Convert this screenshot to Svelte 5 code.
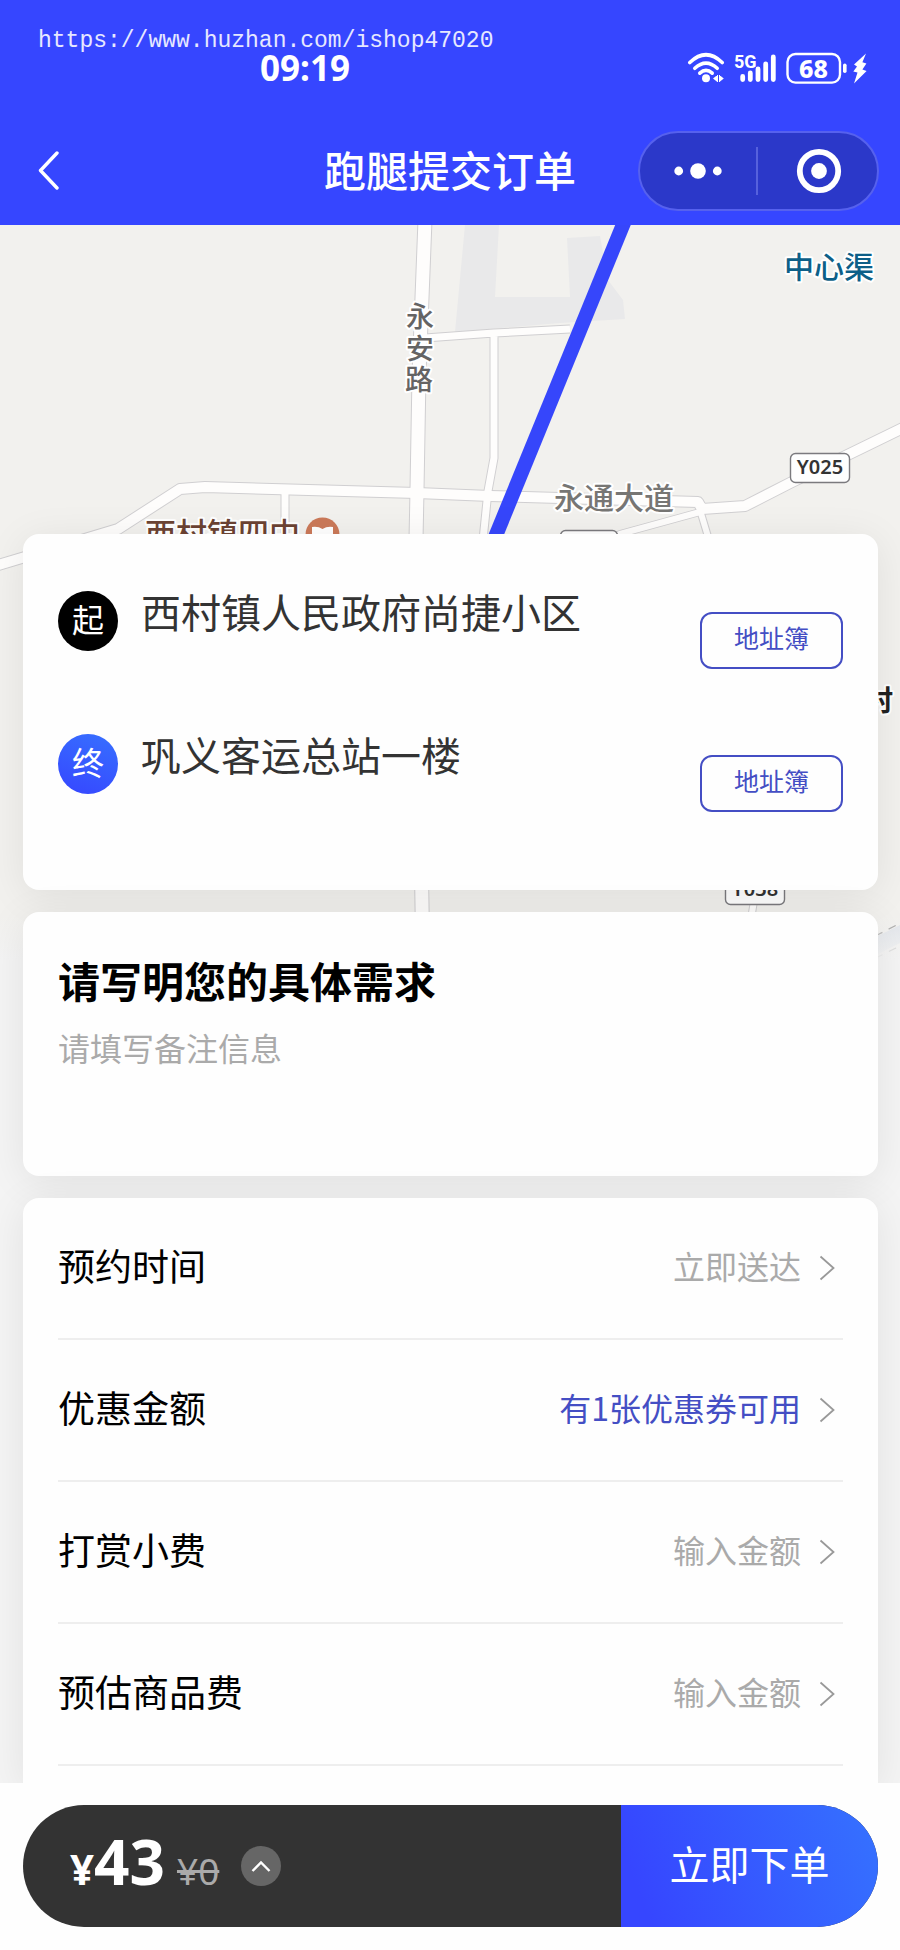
<script>
  const stops = [
    { mark: '起', kind: 'start', name: '西村镇人民政府尚捷小区' },
    { mark: '终', kind: 'end', name: '巩义客运总站一楼' }
  ];
  const options = [
    { id: 'time', label: '预约时间', value: '立即送达' },
    { id: 'coupon', label: '优惠金额', value: '有1张优惠券可用', active: true },
    { id: 'tip', label: '打赏小费', placeholder: '输入金额' },
    { id: 'goods', label: '预估商品费', placeholder: '输入金额' }
  ];
</script>

{#snippet chevron()}
  <svg class="chevron" viewBox="0 0 16 26" aria-hidden="true">
    <path d="M1.5 1.5 14.5 13 1.5 24.5" fill="none" stroke="#999" stroke-width="1.8" />
  </svg>
{/snippet}

<div class="page">
  <header>
    <span class="watermark">https://www.huzhan.com/ishop47020</span>
    <div class="status">
      <span class="clock">09:19</span>
      <svg class="signals" viewBox="0 0 180 33" aria-hidden="true" fill="#fff">
        <g fill="none" stroke="#fff" stroke-width="3.6" stroke-linecap="round">
          <path d="M2.8 10.5Q19-5 35.2 10.5" />
          <path d="M7.8 16.3Q19 6 30.2 16.3" />
          <path d="M12.8 21.2Q19 15.5 25.2 21.2" />
        </g>
        <circle cx="19" cy="26.3" r="4" />
        <path d="M26 26.5 30.4 23v7ZM32.4 23l4.4 3.5-4.4 3.5ZM30 23h1v7h-1zM32 23h1v7h-1z" />
        <text class="network" x="47" y="15.5">5G</text>
        <g stroke="#fff" stroke-width="4.8" stroke-linecap="round">
          <path d="M55.7 24.4V27.6M63.3 21V27.6M71 17V27.6M78.7 11.8V27.6M86.3 5V27.6" />
        </g>
        <rect x="100.5" y="2" width="52.5" height="28.6" rx="8" fill="none" stroke="#fff" stroke-width="2.4" />
        <rect x="156" y="11.5" width="3.6" height="9.5" rx="1.8" />
        <text class="charge" x="126.5" y="25.5">68</text>
        <path d="M179 1.5 167 12.5 170 14.5 166.3 19.5 170.5 20.5 167 31.5 179.6 19 175.4 17.6 179.4 11.6 175.4 10.2Z" />
      </svg>
    </div>
    <nav>
      <button class="back" aria-label="返回">
        <svg viewBox="0 0 22 40"><path d="M19 2 2.5 19.5 19 37" fill="none" stroke="#fff" stroke-width="3.4" stroke-linecap="round" stroke-linejoin="round" /></svg>
      </button>
      <h1>跑腿提交订单</h1>
      <div class="capsule">
        <button aria-label="更多">
          <svg class="dots" viewBox="0 0 48 18" fill="#fff"><circle cx="4.7" cy="9" r="4.4" /><circle cx="24" cy="9" r="7.8" /><circle cx="43.3" cy="9" r="4.4" /></svg>
        </button>
        <button aria-label="关闭">
          <svg class="target" viewBox="0 0 46 46"><circle cx="23" cy="23" r="19.2" fill="none" stroke="#fff" stroke-width="5.8" /><circle cx="23" cy="23" r="7.9" fill="#fff" /></svg>
        </button>
      </div>
    </nav>
  </header>

  <main>
    <svg class="map" viewBox="0 0 900 735" role="img" aria-label="路线地图">
      <defs>
        <linearGradient id="fade" x1="0" y1="0" x2="0" y2="1">
          <stop offset="0" stop-color="#f4f4f4" stop-opacity="0" />
          <stop offset="1" stop-color="#f4f4f4" />
        </linearGradient>
      </defs>
      <rect width="900" height="735" fill="#f2f1ee" />
      <path d="M465 0H499L495 72H570L567 13 600 11 608 55 623 75 625 94 560 98 455 107Z" fill="#e9e9ea" />
      {#each [{ c: '#d0cfd1', e: 2 }, { c: '#fefdfc', e: 0 }] as layer}
        <g fill="none" stroke={layer.c} stroke-linejoin="round">
          <path stroke-width={7 + layer.e} d="M425 113 494 108 570 104M494 108V233L488 266 483 315M285 265V315" />
          <path stroke-width={6 + layer.e} d="M700 287 620 309 600 320M700 285 709 315M755 670 750 700" />
          <path stroke-width={10 + layer.e} d="M-5 341 25 332 118 304 180 264 205 262 417 268 490 271 698 277 702 284 745 281 790 258 905 202" />
          <path stroke-width={13 + layer.e} d="M425 -5 419 150 417 265 416 315 423 740" />
        </g>
      {/each}
      <path d="M870 724 910 704" stroke="#dfe3e9" stroke-width="16" />
      <path d="M862 718 910 693M862 740 910 716" stroke="#999" stroke-width="1.2" stroke-dasharray="8 7" />
      <path d="M625 -5 494 315" stroke="#3646fb" stroke-width="14.4" />
      <g class="labels">
        <text x="784" y="53" font-size="30" fill="#0d5f88">中心渠</text>
        <text x="554" y="284" font-size="30" fill="#777674">永通大道</text>
        <text font-size="28" fill="#656464">
          <tspan x="406" y="102">永</tspan><tspan x="406" y="134">安</tspan><tspan x="405" y="165">路</tspan>
        </text>
        <text x="145" y="320" font-size="31" fill="#6c4333" font-weight="700">西村镇四中</text>
        <text class="village" x="865" y="486" font-size="28" fill="#222">村</text>
      </g>
      <circle cx="322.5" cy="309.5" r="17" fill="#cb7959" />
      <path d="M312 302Q318 301 322.5 304 327 301 333 302V318H312Z" fill="#fff" />
      <g fill="#fefefe" stroke="#7b7a7e" stroke-width="1.4">
        <rect x="790.5" y="228.5" width="59" height="29" rx="5" />
        <rect x="560.5" y="305.5" width="57" height="29" rx="5" />
        <rect x="725.5" y="650.5" width="59" height="29" rx="5" />
      </g>
      <g class="plate"><text x="820" y="249">Y025</text><text x="755" y="671">Y038</text></g>
      <rect y="690" width="900" height="45" fill="url(#fade)" />
    </svg>

    <section class="card route">
      {#each stops as stop}
        <div class="stop">
          <span class="mark {stop.kind}">{stop.mark}</span>
          <p>{stop.name}</p>
          <button>地址簿</button>
        </div>
      {/each}
    </section>

    <section class="card note">
      <h2><label for="remark">请写明您的具体需求</label></h2>
      <textarea id="remark" placeholder="请填写备注信息"></textarea>
    </section>

    <section class="card options">
      {#each options as option}
        <div class="row">
          <label for={option.id}>{option.label}</label>
          {#if option.placeholder}
            <input id={option.id} placeholder={option.placeholder} inputmode="decimal" />
            {@render chevron()}
          {:else}
            <button id={option.id} class:active={option.active}>
              <span>{option.value}</span>
              {@render chevron()}
            </button>
          {/if}
        </div>
      {/each}
    </section>
  </main>

  <footer>
    <div class="bar">
      <div class="price">
        <strong><small>¥</small>43</strong>
        <s>¥0</s>
      </div>
      <button class="expand" aria-label="展开明细">
        <svg viewBox="0 0 20 12"><path d="M1.5 11 10 2.5 18.5 11" fill="none" stroke="#fff" stroke-width="2.4" /></svg>
      </button>
      <button class="submit">立即下单</button>
    </div>
  </footer>
</div>

<style>
  :global(body) {
    background: #f4f4f4;
  }
  .page {
    display: flex;
    flex-direction: column;
    min-height: 100vh;
    color: #000;
    font-family: "Noto Sans CJK SC", sans-serif;
  }
  .page * {
    box-sizing: border-box;
  }
  button, input, textarea {
    padding: 0;
    border: 0;
    background: none;
    color: inherit;
    font-family: inherit;
  }
  h1, h2, p {
    margin: 0;
  }
  svg {
    display: block;
    flex: none;
  }
  header {
    position: relative;
    z-index: 1;
    padding: 46px 21px 14px;
    background: #3646ff;
    color: #fff;
  }
  .watermark {
    position: absolute;
    left: 38px;
    top: 26px;
    font: 23px/30px "Liberation Mono", monospace;
    color: #e6e8ff;
  }
  .status {
    display: flex;
    align-items: center;
    justify-content: space-between;
    height: 44px;
    padding: 0 12px 0 239px;
  }
  .clock {
    font: 700 35px/44px "Noto Sans", sans-serif;
  }
  .signals {
    width: 180px;
    height: 33px;
  }
  .network {
    font: 700 18px "Liberation Sans Narrow", Roboto, sans-serif;
  }
  .charge {
    font: 800 25px "Noto Sans", sans-serif;
    text-anchor: middle;
  }
  nav {
    display: grid;
    grid-template-columns: 1fr auto 1fr;
    align-items: center;
    margin-top: 41px;
  }
  .back {
    justify-self: start;
    padding: 20px 17px;
  }
  .back svg {
    width: 22px;
    height: 40px;
  }
  h1 {
    font-size: 42px;
    font-weight: 500;
    line-height: 50px;
    padding-bottom: 4px;
  }
  .capsule {
    display: flex;
    justify-self: end;
    align-items: center;
    width: 241px;
    height: 80px;
    border: 2px solid #5661ee;
    border-radius: 40px;
    background: #2b38c9;
  }
  .capsule button {
    flex: 1;
    height: 48px;
    display: grid;
    place-items: center;
  }
  .capsule button + button {
    padding-left: 4px;
    border-left: 2px solid #5661dd;
  }
  .dots {
    width: 48px;
    height: 18px;
  }
  .target {
    width: 46px;
    height: 46px;
  }
  main {
    position: relative;
    flex: 1;
    display: flex;
    flex-direction: column;
    gap: 22px;
    padding: 309px 22px 0 23px;
    overflow: hidden;
  }
  .map {
    position: absolute;
    top: 0;
    left: 0;
    width: 100%;
  }
  .labels text {
    font-weight: 500;
    stroke: #fff;
    stroke-width: 4px;
    stroke-linejoin: round;
    paint-order: stroke;
  }
  .labels .village {
    font-weight: 700;
  }
  .plate {
    fill: #333;
    font: 600 20px "Noto Sans", sans-serif;
    text-anchor: middle;
  }
  .card {
    position: relative;
    padding: 0 35px;
    border-radius: 16px;
    background: #fefefe;
    box-shadow: 0 6px 40px rgb(0 0 0 / 8%);
  }
  .route {
    display: flex;
    flex-direction: column;
    gap: 65px;
    padding-top: 57px;
    padding-bottom: 78px;
  }
  .stop {
    display: flex;
    align-items: flex-start;
    height: 78px;
  }
  .mark {
    flex: none;
    width: 60px;
    height: 60px;
    border-radius: 50%;
    background: #000;
    color: #fff;
    font-size: 32px;
    line-height: 54px;
    text-align: center;
  }
  .mark.end {
    background: linear-gradient(200deg, #3770ff, #3646ff);
  }
  .stop p {
    flex: 1;
    padding-left: 23px;
    color: #333;
    font-size: 40px;
    line-height: 40px;
  }
  .stop button {
    width: 143px;
    height: 57px;
    margin-top: 21px;
    padding-bottom: 8px;
    border: 2px solid #444ec4;
    border-radius: 12px;
    color: #444ec4;
    font-size: 25px;
  }
  .note {
    padding-top: 41px;
  }
  h2 {
    font-size: 42px;
    font-weight: 700;
    line-height: 54px;
  }
  textarea {
    display: block;
    width: 100%;
    height: 150px;
    margin-top: 19px;
    font-size: 32px;
    line-height: 42px;
    resize: none;
    outline: none;
  }
  ::placeholder {
    color: #aaa;
    opacity: 1;
  }
  .options {
    flex: 1;
    padding-bottom: 17px;
    border-radius: 16px 16px 0 0;
  }
  .row {
    display: flex;
    align-items: center;
    height: 142px;
    border-bottom: 2px solid #eee;
  }
  .row label {
    flex: none;
    padding-bottom: 6px;
    font-size: 37px;
    line-height: 48px;
  }
  .row input {
    flex: 1;
    min-width: 0;
    padding-bottom: 6px;
    font-size: 32px;
    line-height: 48px;
    text-align: right;
    outline: none;
  }
  .row button {
    display: flex;
    flex: 1;
    align-items: center;
    justify-content: flex-end;
    color: #aaa;
    font-size: 32px;
    line-height: 48px;
  }
  .row button span {
    padding-bottom: 6px;
  }
  .row button.active {
    color: #444ec4;
  }
  .chevron {
    width: 16px;
    height: 26px;
    margin: 0 8px 0 18px;
  }
  footer {
    position: sticky;
    bottom: 0;
    padding: 22px 22px 23px 23px;
    background: #fefefe;
  }
  .bar {
    display: flex;
    align-items: center;
    height: 122px;
    padding-left: 47px;
    border-radius: 61px;
    background: #333;
    overflow: hidden;
  }
  .price {
    display: flex;
    align-items: baseline;
    gap: 12px;
    color: #fff;
    font-family: "Noto Sans", sans-serif;
    line-height: 80px;
  }
  .price strong {
    font-size: 62px;
  }
  .price small {
    font-size: 42px;
  }
  .price s {
    color: #aaa;
    font-size: 37px;
  }
  .expand {
    display: grid;
    place-items: center;
    width: 40px;
    height: 40px;
    margin-left: 22px;
    border-radius: 50%;
    background: #666;
  }
  .expand svg {
    width: 20px;
    height: 12px;
  }
  .submit {
    align-self: stretch;
    width: 257px;
    margin-left: auto;
    padding-bottom: 6px;
    background: linear-gradient(70deg, #3646ff 10%, #3572ff);
    color: #fff;
    font-size: 40px;
  }
</style>
